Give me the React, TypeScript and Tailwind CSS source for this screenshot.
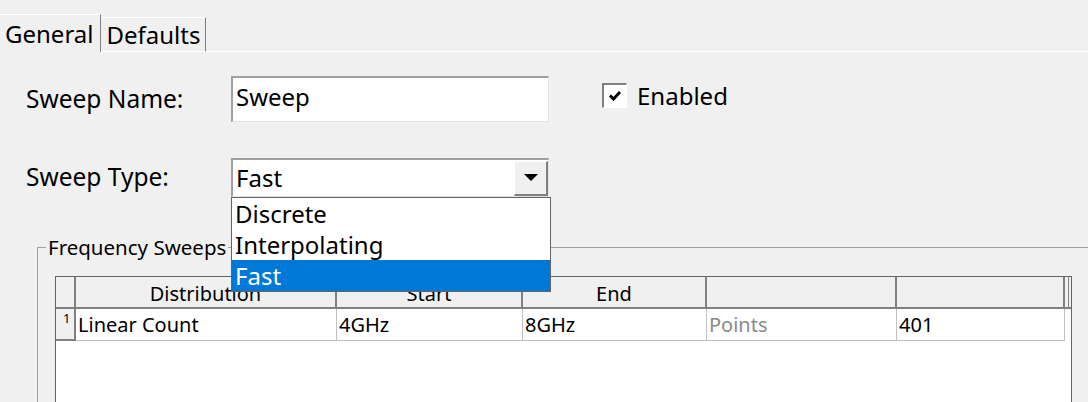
import React from "react";

const FONT = { fontFamily: '"Noto Sans", "Open Sans", sans-serif' };

type Col = { label: string; width: string; value: string; muted?: boolean };

const COLUMNS: Col[] = [
  { label: "Distribution", width: "w-[261px]", value: "Linear Count" },
  { label: "Start", width: "w-[186px]", value: "4GHz" },
  { label: "End", width: "w-[184px]", value: "8GHz" },
  { label: "", width: "w-[190px]", value: "Points", muted: true },
  { label: "", width: "w-[168px]", value: "401" },
];

function Tabs() {
  return (
    <div className="flex h-[52px] items-end">
      <div className="flex h-[38px] items-center border-t border-r border-t-white border-r-[#808080] pl-[5px] pr-[7px] text-[24px] text-black">
        General
      </div>
      <div className="flex h-[35px] items-center border-t border-r border-b border-t-white border-r-[#808080] border-b-white px-[5px] text-[24px] text-black">
        Defaults
      </div>
      <div className="h-[1px] flex-1 bg-white" />
    </div>
  );
}

function Checkbox() {
  return (
    <div className="flex h-[25px] w-[25px] items-center justify-center border-t-2 border-l-2 border-b border-r border-t-[#808080] border-l-[#808080] border-b-white border-r-white bg-white">
      <svg width="14" height="12" viewBox="0 0 14 12">
        <path d="M2 5.5 L5.5 9 L12 2" stroke="#000" strokeWidth="3" fill="none" />
      </svg>
    </div>
  );
}

function Combo() {
  return (
    <div className="relative">
      <div className="flex h-[39px] w-[318px] items-center border-t-2 border-l-2 border-b border-r border-t-[#a0a0a0] border-l-[#a0a0a0] border-b-[#e3e3e3] border-r-[#e3e3e3] bg-white">
        <span className="flex-1 pl-[3px] text-[24px] text-black">Fast</span>
        <div className="flex h-[35px] w-[34px] items-center justify-center border-t border-l border-b-2 border-r-2 border-t-white border-l-white border-b-[#808080] border-r-[#808080] bg-[#f0f0f0]">
          <svg width="16" height="8" viewBox="0 0 16 8">
            <path d="M1 0 L15 0 L8 7 Z" fill="#000" />
          </svg>
        </div>
      </div>
      <div className="absolute left-0 top-[39px] z-10 w-[320px] border border-[#646464] bg-white text-[24px] text-black">
        <div className="flex h-[31px] items-center pl-[3px]">Discrete</div>
        <div className="flex h-[31px] items-center pl-[3px]">Interpolating</div>
        <div className="flex h-[31px] items-center bg-[#0078d7] pl-[3px] text-white">Fast</div>
      </div>
    </div>
  );
}

function Grid() {
  return (
    <div className="ml-[17px] mt-[17px] w-[1017px] border-t border-l border-r border-[#646464] bg-white">
      <div className="flex h-[32px] border-b-2 border-[#808080] bg-[#f0f0f0] text-[20px] text-black">
        <div className="w-[20px] border-r-2 border-[#808080]" />
        {COLUMNS.map((c, i) => (
          <div
            key={i}
            className={`${c.width} flex items-center justify-center border-r-2 border-[#808080] pt-[3px]`}
          >
            {c.label}
          </div>
        ))}
        <div className="w-[4px] border-r border-[#808080]" />
      </div>
      <div className="flex h-[32px] text-[20px]">
        <div className="w-[20px] border-r-2 border-b-2 border-[#808080] bg-[#f0f0f0] pl-[7px] text-[13px] leading-[18px] text-black">
          1
        </div>
        {COLUMNS.map((c, i) => (
          <div
            key={i}
            className={`${c.width} flex items-center border-r border-b border-[#c0c0c0] pl-[2px] ${
              c.muted ? "text-[#8a8a8a]" : "text-black"
            }`}
          >
            {c.value}
          </div>
        ))}
      </div>
      <div className="h-[80px]" />
    </div>
  );
}

export default function App() {
  return (
    <div className="h-[402px] w-[1088px] overflow-hidden bg-[#f0f0f0]" style={FONT}>
      <Tabs />
      <div className="mt-[24px] flex items-center">
        <span className="w-[231px] pl-[26px] text-[24.5px] text-black">Sweep Name:</span>
        <div className="flex h-[46px] w-[318px] items-start border-t-2 border-l-2 border-b border-r border-t-[#a0a0a0] border-l-[#a0a0a0] border-b-[#e3e3e3] border-r-[#e3e3e3] bg-white pl-[3px] text-[24px] leading-[38px] text-black">
          Sweep
        </div>
        <div className="mb-[7px] ml-[53px] flex items-center gap-[10px]">
          <Checkbox />
          <span className="text-[24px] text-black">Enabled</span>
        </div>
      </div>
      <div className="mt-[36px] flex items-center">
        <span className="w-[231px] pl-[26px] text-[24.5px] text-black">Sweep Type:</span>
        <Combo />
      </div>
      <fieldset className="ml-[37px] mt-[38px] h-[200px] border-t border-l border-t-[#a0a0a0] border-l-[#a0a0a0]">
        <legend className="ml-[8px] px-[2px] text-[20.5px] leading-[24px] text-black">Frequency Sweeps</legend>
        <Grid />
      </fieldset>
    </div>
  );
}
